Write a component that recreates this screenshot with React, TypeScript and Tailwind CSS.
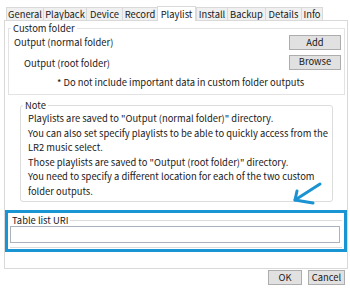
const tabs = [
  { label: "General", w: "w-[37px]" },
  { label: "Playback", w: "w-[43px]" },
  { label: "Device", w: "w-[36px]" },
  { label: "Record", w: "w-[35px]" },
  { label: "Playlist", w: "w-[39px]", active: true },
  { label: "Install", w: "w-[31px]" },
  { label: "Backup", w: "w-[38px]" },
  { label: "Details", w: "w-[36px]" },
  { label: "Info", w: "w-[22px]" },
];

const noteLines = [
  'Playlists are saved to "Output (normal folder)" directory.',
  "You can also set specify playlists to be able to quickly access from the",
  "LR2 music select.",
  'Those playlists are saved to "Output (root folder)" directory.',
  "You need to specify a different location for each of the two custom",
  "folder outputs.",
];

function Button({ label, className = "" }: { label: string; className?: string }) {
  return (
    <div
      className={
        "flex items-center justify-center border border-[#adadad] bg-[#e1e1e1] leading-none text-[#1a1a1a] " +
        className
      }
    >
      {label}
    </div>
  );
}

function App() {
  return (
    <div
      className="relative flex h-[288px] w-[350px] flex-col overflow-hidden bg-white text-[9.4px] whitespace-nowrap text-[#1a1a1a]"
      style={{ fontFamily: '"Noto Sans CJK JP", "Liberation Sans", sans-serif' }}
    >
      {/* tab strip */}
      <div className="flex h-[20px] items-end pl-[6px]">
        {tabs.map((t, i) =>
          t.active ? (
            <div
              key={t.label}
              className={`relative z-10 -mb-px flex h-[15px] items-center justify-center border-x border-t border-[#d9d9d9] bg-white ${t.w}`}
            >
              {t.label}
            </div>
          ) : (
            <div
              key={t.label}
              className={`flex h-[13px] items-center justify-center border-t border-l border-[#d9d9d9] bg-[#f0f0f0] ${t.w} ${
                i === tabs.length - 1 ? "border-r" : ""
              }`}
            >
              {t.label}
            </div>
          )
        )}
      </div>

      {/* panel */}
      <div className="ml-[4px] flex h-[249px] w-[344px] flex-col border border-[#d9d9d9]">
        <fieldset className="ml-[3px] w-[337px] border border-[#e3e3e3] pb-[4px]">
          <legend className="ml-[2px] px-[2px] leading-[14px]">Custom folder</legend>
          <div className="flex items-center justify-between pl-[5px] pr-[3px]">
            <span>Output (normal folder)</span>
            <Button label="Add" className="h-[15px] w-[52px]" />
          </div>
          <div className="mt-[4px] flex items-center justify-between pl-[15px] pr-[3px]">
            <span className="pt-[2px]">Output (root folder)</span>
            <Button label="Browse" className="h-[15px] w-[52px]" />
          </div>
          <div className="mt-[5px] pl-[48px] leading-[15px]">
            * Do not include important data in custom folder outputs
          </div>
        </fieldset>

        <fieldset className="mt-[4px] ml-[15px] w-[313px] rounded-[3px] border border-[#dcdcdc] pb-[3px]">
          <legend className="ml-[2px] px-[2px] leading-[12px]">Note</legend>
          <div className="pl-[7px] leading-[14.5px]">
            {noteLines.map((l) => (
              <div key={l}>{l}</div>
            ))}
          </div>
        </fieldset>

        <div className="mt-[8px] flex h-[42px] flex-col border-[3px] border-[#1a95d3]">
          <fieldset className="mt-px ml-[2px] w-[332px] border-y border-[#dcdcdc] pb-[4px]">
            <legend className="px-[2px] leading-[12px]">Table list URI</legend>
            <div className="h-[17px] w-[330px] border border-[#a9b3bd] bg-white" />
          </fieldset>
        </div>
      </div>

      {/* dialog buttons */}
      <div className="mt-px flex justify-end gap-[6px] pr-[5px]">
        <Button label="OK" className="h-[15px] w-[34px]" />
        <Button label="Cancel" className="h-[15px] w-[37px]" />
      </div>

      {/* annotation arrow */}
      <svg
        className="absolute left-[290px] top-[180px]"
        width="34"
        height="28"
        viewBox="0 0 34 28"
        fill="none"
        stroke="#1b92d2"
        strokeWidth="3"
        strokeLinecap="round"
        strokeLinejoin="round"
      >
        <path d="M30 4 L5 20" />
        <path d="M7 11 L5 20 L23 23" />
      </svg>
    </div>
  );
}

export default App;
